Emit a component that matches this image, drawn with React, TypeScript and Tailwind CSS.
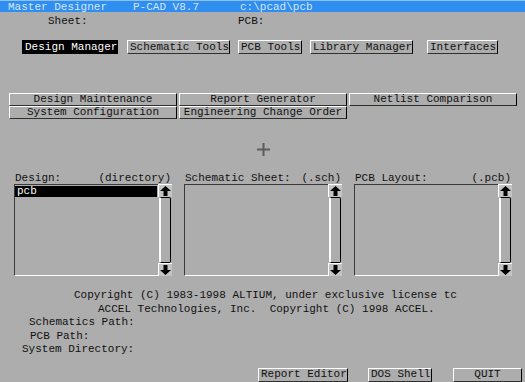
import React from "react"

function Bevel({ label, w, active, center }: { label: string; w: string; active?: boolean; center?: boolean }) {
  return (
    <div
      className={
        "h-full flex items-center whitespace-pre border-t border-l border-r border-b px-[2px] " +
        w +
        (center ? " justify-center" : "") +
        (active
          ? " bg-black text-white border-black"
          : " bg-[#adadad] border-t-white border-l-white border-r-black border-b-[#303030]")
      }
    >
      {label}
    </div>
  )
}

function Arrow({ down }: { down?: boolean }) {
  return (
    <svg width="11" height="10" viewBox="0 0 11 10" className={down ? "rotate-180" : ""}>
      <polygon points="5.5,0 11,5 7.5,5 7.5,10 3.5,10 3.5,5 0,5" fill="#000" />
    </svg>
  )
}

function ListPanel({ title, ext, items }: { title: string; ext: string; items: string[] }) {
  return (
    <div className="w-[158px] flex flex-col">
      <div className="h-[12px] flex justify-between items-center px-[1px]">
        <span>{title}</span>
        <span>{ext}</span>
      </div>
      <div className="h-[92px] flex">
        <div className="flex-1 border-t border-l border-b border-t-[#3a3a3a] border-l-[#3a3a3a] border-b-white pt-[1px]">
          {items.map((it, i) => (
            <div key={i} className="h-[11px] leading-[11px] bg-black text-white pl-[2px] mr-[1px]">
              {it}
            </div>
          ))}
        </div>
        <div className="w-[14px] flex flex-col">
          <div className="h-[13px] flex items-center justify-center bg-[#c4c4c4] border-t border-l border-white">
            <Arrow />
          </div>
          <div className="flex-1 mx-[1px] border border-black border-l-2 border-l-white rounded-[2px]" />
          <div className="h-[13px] flex items-center justify-center bg-[#c4c4c4] border-t border-l border-white">
            <Arrow down />
          </div>
        </div>
      </div>
    </div>
  )
}

export default function App() {
  return (
    <div
      className="w-[525px] h-[382px] overflow-hidden bg-[#adadad] text-[#111] text-[11px] leading-[13px] flex flex-col"
      style={{ fontFamily: '"Liberation Mono", "Courier New", monospace' }}
    >
      {/* title bar */}
      <div className="h-[12px] bg-[#2f8ef0] text-[#d6e6fa] leading-[12px] flex pl-[8px] border-t border-[#8cc0f4] whitespace-pre">
        <span className="w-[125px]">Master Designer</span>
        <span className="w-[107px]">P-CAD V8.7</span>
        <span>c:\pcad\pcb</span>
      </div>

      <div className="h-[16px] flex items-center pl-[48px] pt-[3px]">
        <span className="w-[190px]">Sheet:</span>
        <span>PCB:</span>
      </div>

      {/* main tools */}
      <div className="mt-[12px] h-[14px] flex pl-[22px]">
        <Bevel label="Design Manager" w="w-[96px]" active />
        <div className="w-[9px]" />
        <Bevel label="Schematic Tools" w="w-[103px]" />
        <div className="w-[8px]" />
        <Bevel label="PCB Tools" w="w-[64px]" />
        <div className="w-[8px]" />
        <Bevel label="Library Manager" w="w-[103px]" />
        <div className="w-[14px]" />
        <Bevel label="Interfaces" w="w-[71px]" />
      </div>

      {/* utilities */}
      <div className="mt-[39px] pl-[9px] grid grid-cols-[168px_168px_168px] grid-rows-[13px_13px] gap-x-[2px]">
        <Bevel label="Design Maintenance" w="w-full" center />
        <Bevel label="Report Generator" w="w-full" center />
        <Bevel label="Netlist Comparison" w="w-full" center />
        <Bevel label="System Configuration" w="w-full" center />
        <Bevel label="Engineering Change Order" w="w-full" center />
      </div>

      <div className="mt-[24px] h-[13px] flex justify-center pl-[2px]">
        <svg width="13" height="13" viewBox="0 0 13 13">
          <rect x="5.5" y="0" width="2" height="13" fill="#5c5c5c" />
          <rect x="0" y="5.5" width="13" height="2" fill="#5c5c5c" />
        </svg>
      </div>

      {/* lists */}
      <div className="mt-[16px] flex pl-[14px] gap-[12px]">
        <ListPanel title="Design:" ext="(directory)" items={["pcb"]} />
        <ListPanel title="Schematic Sheet:" ext="(.sch)" items={[]} />
        <ListPanel title="PCB Layout:" ext="(.pcb)" items={[]} />
      </div>

      {/* info */}
      <div className="mt-[13px] leading-[13.5px] whitespace-pre">
        <div className="pl-[74px]">Copyright (C) 1983-1998 ALTIUM, under exclusive license tc</div>
        <div className="pl-[98px]">ACCEL Technologies, Inc.  Copyright (C) 1998 ACCEL.</div>
        <div className="pl-[29px]">Schematics Path:</div>
        <div className="pl-[30px]">PCB Path:</div>
        <div className="pl-[22px]">System Directory:</div>
      </div>

      <div className="mt-[11px] h-[14px] flex pl-[258px]">
        <Bevel label="Report Editor" w="w-[90px]" />
        <div className="w-[20px]" />
        <Bevel label="DOS Shell" w="w-[64px]" />
        <div className="w-[21px]" />
        <Bevel label="QUIT" w="w-[69px]" center />
      </div>
    </div>
  )
}
